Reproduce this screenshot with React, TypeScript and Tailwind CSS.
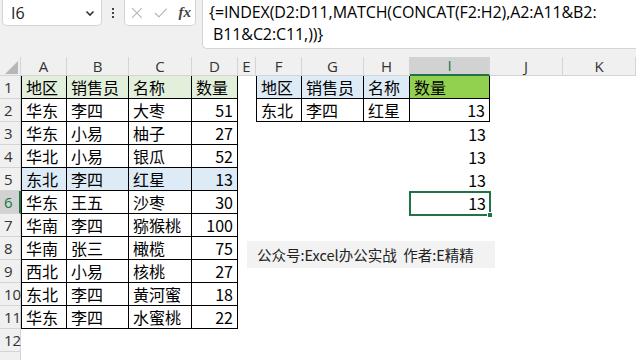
import React from "react";

type Cell = { t?: string; num?: boolean; fill?: string; b?: boolean; bl?: boolean };

const COLS = ["A", "B", "C", "D", "E", "F", "G", "H", "I", "J", "K"];

const left: string[][] = [
  ["地区", "销售员", "名称", "数量"],
  ["华东", "李四", "大枣", "51"],
  ["华东", "小易", "柚子", "27"],
  ["华北", "小易", "银瓜", "52"],
  ["东北", "李四", "红星", "13"],
  ["华东", "王五", "沙枣", "30"],
  ["华南", "李四", "猕猴桃", "100"],
  ["华南", "张三", "橄榄", "75"],
  ["西北", "小易", "核桃", "27"],
  ["东北", "李四", "黄河蜜", "18"],
  ["华东", "李四", "水蜜桃", "22"],
];

function buildRows(): Cell[][] {
  const rows: Cell[][] = [];
  for (let r = 0; r < 13; r++) {
    const row: Cell[] = [];
    for (let c = 0; c < 11; c++) row.push({});
    rows.push(row);
  }
  left.forEach((vals, r) => {
    vals.forEach((v, c) => {
      rows[r][c] = {
        t: v,
        num: r > 0 && c === 3,
        b: true,
        bl: c === 0,
        fill: r === 0 ? "green" : r === 4 ? "blue" : undefined,
      };
    });
  });
  const right = [
    ["地区", "销售员", "名称", "数量"],
    ["东北", "李四", "红星", "13"],
  ];
  right.forEach((vals, r) => {
    vals.forEach((v, i) => {
      const c = 5 + i;
      rows[r][c] = {
        t: v,
        num: r > 0 && i === 3,
        b: true,
        bl: i === 0,
        fill: r === 0 ? (i === 3 ? "lime" : "blue") : undefined,
      };
    });
  });
  for (let r = 2; r <= 5; r++) rows[r][8] = { t: "13", num: true };
  return rows;
}

const fillClass = (f?: string) =>
  f === "green" ? "bg-[#e2efda]" : f === "blue" ? "bg-[#ddebf7]" : f === "lime" ? "bg-[#92d050]" : "bg-white";

export default function App() {
  const rows = buildRows();
  return (
    <div className="w-[636px] h-[360px] overflow-hidden bg-white relative" style={{ fontFamily: '"Noto Sans", "Noto Sans CJK SC", sans-serif' }}>
      {/* Formula bar */}
      <div className="h-[57px] bg-[#f0f0f0] flex items-start">
        <div className="ml-[2px] w-[100px] h-[26px] bg-white border border-t-0 border-[#d4d4d4] rounded-b-[5px] flex items-center justify-between pl-[8px] pr-[6px]">
          <span className="text-[16px] text-[#222] leading-none" style={{ fontFamily: '"Open Sans", sans-serif' }}>I6</span>
          <svg width="10" height="8" viewBox="0 0 10 8">
            <path d="M1.5 2.5 L5 6 L8.5 2.5" fill="none" stroke="#333" strokeWidth="1.6" />
          </svg>
        </div>
        <div className="w-[22px] h-[26px] flex flex-col items-center justify-center gap-[2px]">
          <div className="w-[2px] h-[2px] bg-[#444]" />
          <div className="w-[2px] h-[2px] bg-[#444]" />
          <div className="w-[2px] h-[2px] bg-[#444]" />
        </div>
        <div className="w-[72px] h-[26px] bg-white border border-t-0 border-[#d4d4d4] rounded-b-[5px] flex items-center pl-[6px] pr-[4px]">
          <svg width="12" height="12" viewBox="0 0 12 12">
            <path d="M1 1 L11 11 M11 1 L1 11" stroke="#b8b8b8" strokeWidth="1.2" fill="none" />
          </svg>
          <svg width="14" height="12" viewBox="0 0 14 12" className="ml-[11px]">
            <path d="M1 6 L5 10 L13 1.5" stroke="#b8b8b8" strokeWidth="1.2" fill="none" />
          </svg>
          <span className="ml-[11px] text-[15px] italic font-bold text-[#444] leading-none" style={{ fontFamily: '"Liberation Serif", serif' }}>
            fx
          </span>
        </div>
        <div className="ml-[6px] flex-1 h-[49px] bg-white border border-t-0 border-r-0 border-[#d4d4d4] rounded-bl-[5px] pl-[6px] pt-[1px] text-[16px] leading-[22px] text-black whitespace-nowrap tracking-[-0.1px]" style={{ fontFamily: '"Open Sans", sans-serif' }}>
          <div>{"{=INDEX(D2:D11,MATCH(CONCAT(F2:H2),A2:A11&B2:"}</div>
          <div className="pl-[4px]">{"B11&C2:C11,))}"}</div>
        </div>
      </div>

      {/* Grid */}
      <div className="grid grid-cols-[21px_46px_62px_63px_46px_18px_46px_62px_46px_80px_73px_73px]">
        {/* header row */}
        <div className="h-[19px] bg-[#f0f0f0] border-r border-b border-[#d4d4d4] relative">
          <svg width="14" height="13" viewBox="0 0 14 13" className="absolute left-[5px] top-[4px]">
            <path d="M13 0 L13 13 L0 13 Z" fill="#b7b7b7" />
          </svg>
        </div>
        {COLS.map((c) => (
          <div
            key={c}
            className={
              c === "I"
                ? "h-[19px] bg-[#d2d2d2] border-r border-[#d4d4d4] border-b-2 border-b-[#217346] flex items-center justify-center text-[15px] text-[#217346]"
                : "h-[19px] bg-[#f0f0f0] border-r border-b border-[#d4d4d4] flex items-center justify-center text-[15px] text-[#333]"
            }
            style={{ fontFamily: '"Open Sans", sans-serif' }}
          >
            {c}
          </div>
        ))}
        {rows.map((row, r) => (
          <React.Fragment key={r}>
            <div
              className={
                r === 5
                  ? "h-[23px] bg-[#d2d2d2] border-b border-[#d4d4d4] border-r-2 border-r-[#217346] flex items-center pl-[4px] text-[15px] text-[#217346]"
                  : "h-[23px] bg-[#f0f0f0] border-r border-b border-[#d4d4d4] flex items-center pl-[4px] text-[15px] text-[#333]"
              }
              style={{ fontFamily: '"Open Sans", sans-serif' }}
            >
              {r < 12 ? r + 1 : ""}
            </div>
            {row.map((cell, c) => {
              const border = cell.b
                ? cell.bl
                  ? "border-l border-r border-b border-black"
                  : "border-r border-b border-black"
                : "";
              const isSel = r === 5 && c === 8;
              return (
                <div
                  key={c}
                  className={`h-[23px] relative flex items-center text-[16px] text-black leading-none ${fillClass(cell.fill)} ${border} ${
                    cell.num ? "justify-end pr-[4px]" : "justify-start pl-[4px]"
                  } ${isSel ? "z-10" : ""}`}
                  style={{ fontFamily: '"Noto Sans CJK SC", sans-serif' }}
                >
                  {cell.t}
                  {isSel && (
                    <div className="absolute -left-px top-0 -right-px -bottom-[2px] border-2 border-[#217346] z-10">
                      <div className="absolute -right-[4px] -bottom-[4px] w-[6px] h-[6px] bg-[#217346] border border-white" />
                    </div>
                  )}
                </div>
              );
            })}
          </React.Fragment>
        ))}
      </div>

      {/* floating caption shape */}
      <div
        className="absolute left-[247px] top-[241px] w-[248px] h-[27px] bg-[#f2f2f2] flex items-center pl-[10px] text-[14.5px] text-[#222] z-20"
        style={{ fontFamily: '"Noto Sans CJK SC", sans-serif' }}
      >
        公众号:Excel办公实战&nbsp;&nbsp;作者:E精精
      </div>
    </div>
  );
}
